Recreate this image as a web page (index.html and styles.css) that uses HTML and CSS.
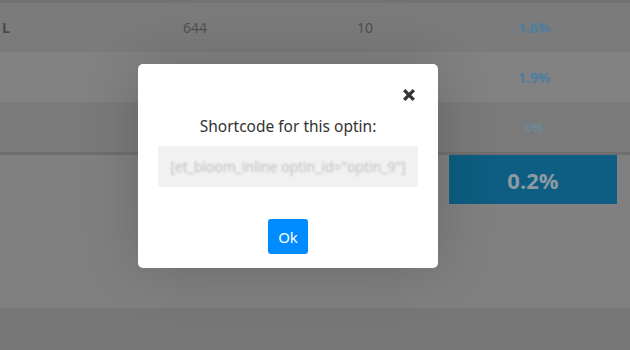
FILE: index.html
```html
<!DOCTYPE html>
<html>
<head>
<meta charset="utf-8">
<link rel="stylesheet" href="styles.css">
</head>
<body>
<div class="page">
  <div class="strip"></div>
  <div class="row r1">
    <div class="cell name">L</div>
    <div class="cell num">644</div>
    <div class="cell num">10</div>
    <div class="cell rate">1.6%</div>
  </div>
  <div class="row r2">
    <div class="cell name"></div>
    <div class="cell num"></div>
    <div class="cell num"></div>
    <div class="cell rate">1.9%</div>
  </div>
  <div class="row r3">
    <div class="cell name"></div>
    <div class="cell num"></div>
    <div class="cell num"></div>
    <div class="cell rate faded">0%</div>
  </div>
  <div class="divider"></div>
  <div class="panel">
    <div></div><div></div><div></div>
    <div class="total">0.2%</div>
  </div>
  <div class="footer"></div>
</div>

<div class="modal">
  <button class="close" aria-label="Close">
    <svg width="12" height="12" viewBox="0 0 12 12"><path d="M1.2 1.2 L10.8 10.8 M10.8 1.2 L1.2 10.8" stroke="#333" stroke-width="3.3" fill="none"/></svg>
  </button>
  <h3 class="title">Shortcode for this optin:</h3>
  <div class="code"><span>[et_bloom_inline optin_id="optin_9"]</span></div>
  <div class="actions"><button class="ok">Ok</button></div>
</div>
</body>
</html>
```

FILE: styles.css
```css
* { box-sizing: border-box; }
html, body { margin: 0; padding: 0; }
body {
  width: 630px;
  height: 350px;
  overflow: hidden;
  background: #808080;
  font-family: "Open Sans", "Noto Sans", sans-serif;
  position: relative;
}
.page { display: flex; flex-direction: column; }
.strip { height: 3px; background: #737373; }
.row {
  display: grid;
  grid-template-columns: 110px 170px 170px 168px 12px;
  align-items: center;
}
.r1 { height: 49px; background: #7b7b7b; }
.r2 { height: 50px; background: #828282; }
.r3 { height: 50px; background: #7a7a7a; }
.cell { text-align: center; font-size: 14px; color: #4e4e4e; }
.name { text-align: left; padding-left: 2px; font-weight: 700; color: #454a50; }
.rate { font-weight: 700; color: #4b7ea2; }
.rate.faded { font-weight: 600; font-size: 13px; color: #6a8ba0; }
.divider { height: 3px; background: #6f6f6f; }
.panel {
  height: 153px;
  background: #808080;
  display: grid;
  grid-template-columns: 449px 0 0 168px;
  align-items: start;
}
.total {
  height: 49px;
  background: #0d5e82;
  color: #8c9aa4;
  font-weight: 700;
  font-size: 22px;
  display: flex;
  align-items: center;
  justify-content: center;
}
.footer { height: 42px; background: #777777; }

.modal {
  position: absolute;
  left: 138px;
  top: 64px;
  width: 300px;
  height: 204px;
  background: #fff;
  border-radius: 5px;
  box-shadow: 0 0 60px rgba(0,0,0,0.18);
  padding: 50px 20px 14px;
  display: flex;
  flex-direction: column;
}
.close {
  position: absolute;
  top: 25px;
  right: 23px;
  width: 12px;
  height: 12px;
  padding: 0;
  border: 0;
  background: none;
  display: block;
}
.close svg { display: block; }
.title {
  margin: 0;
  height: 24px;
  line-height: 24px;
  text-align: center;
  font-family: "Noto Sans", sans-serif;
  font-weight: 400;
  font-size: 15.5px;
  color: #333;
}
.code {
  margin-top: 8px;
  height: 41px;
  background: #f1f1f1;
  border-radius: 3px;
  display: flex;
  align-items: center;
  justify-content: center;
  overflow: hidden;
}
.code span {
  font-size: 14px;
  letter-spacing: 0;
  color: #bcbcbc;
  filter: blur(1px);
  white-space: nowrap;
}
.actions {
  margin-top: 32px;
  display: flex;
  justify-content: center;
}
.ok {
  width: 40px;
  height: 35px;
  background: #008bff;
  color: #fff;
  border: 0;
  border-radius: 3px;
  font-family: "Noto Sans", sans-serif;
  font-size: 15px;
  padding: 0;
}
```
